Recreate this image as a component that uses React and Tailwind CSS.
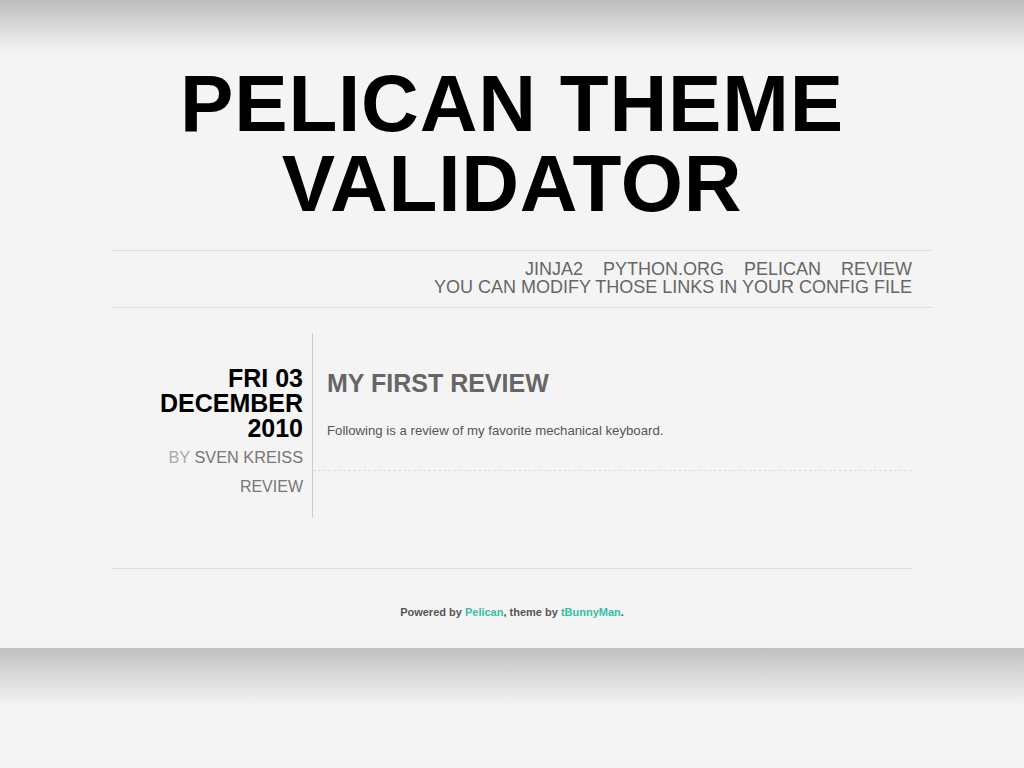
const links = ["JINJA2", "PYTHON.ORG", "PELICAN", "REVIEW"];

export default function App() {
  return (
    <div className="min-h-screen bg-[#f4f4f4] font-['Liberation_Sans',Arial,sans-serif]">
      <div className="bg-[linear-gradient(to_bottom,#bdbdbd_0px,#f4f4f4_52px)] bg-no-repeat">
        {/* Header */}
        <header className="pt-[64px]">
          <h1 className="text-center text-[80px] leading-[80px] font-bold text-black tracking-[0.8px]">
            PELICAN THEME
            <br />
            VALIDATOR
          </h1>
        </header>

        {/* Navigation */}
        <nav className="ml-[112px] mt-[26px] w-[820px] border-y border-[#dddddd] pt-[9px] pb-[11px] pr-[20px] text-right text-[18px] leading-[18px] text-[#666666]">
          <div className="flex justify-end gap-[20px]">
            {links.map((l) => (
              <span key={l}>{l}</span>
            ))}
          </div>
          <div>YOU CAN MODIFY THOSE LINKS IN YOUR CONFIG FILE</div>
        </nav>

        {/* Article */}
        <section className="ml-[112px] mt-[25px] flex w-[800px]">
          <div className="w-[200px] shrink-0 pr-[9px] pt-[33px] pb-[23px] text-right">
            <div className="text-[25px] leading-[25px] font-bold text-black">
              FRI 03
              <br />
              DECEMBER
              <br />
              2010
            </div>
            <div className="mt-[8px] text-[16.3px] leading-[17px] text-[#777777]">
              <span className="text-[#aaaaaa]">BY </span>SVEN KREISS
            </div>
            <div className="mt-[13px] text-[16px] leading-[16px] text-[#777777]">REVIEW</div>
          </div>
          <div className="flex-1 border-l border-[#cccccc]">
            <div className="border-b border-dashed border-[#dddddd] pl-[14px] pt-[38px] pb-[30px]">
              <h2 className="text-[25px] leading-[25px] font-bold text-[#666666]">MY FIRST REVIEW</h2>
              <p className="mt-[26px] text-[13.2px] leading-[18px] text-[#555555]">
                Following is a review of my favorite mechanical keyboard.
              </p>
            </div>
          </div>
        </section>

        {/* Footer */}
        <footer className="ml-[112px] mt-[50px] w-[800px] border-t border-[#dddddd] pt-[38px] pb-[30px] text-center text-[11px] leading-[11px] font-bold text-[#555555]">
          Powered by <span className="text-[#36bfa6]">Pelican</span>, theme by{" "}
          <span className="text-[#36bfa6]">tBunnyMan</span>.
        </footer>
      </div>
      <div className="h-[120px] bg-[linear-gradient(to_bottom,#c0c0c0_0px,#f4f4f4_58px)] bg-no-repeat" />
    </div>
  );
}
